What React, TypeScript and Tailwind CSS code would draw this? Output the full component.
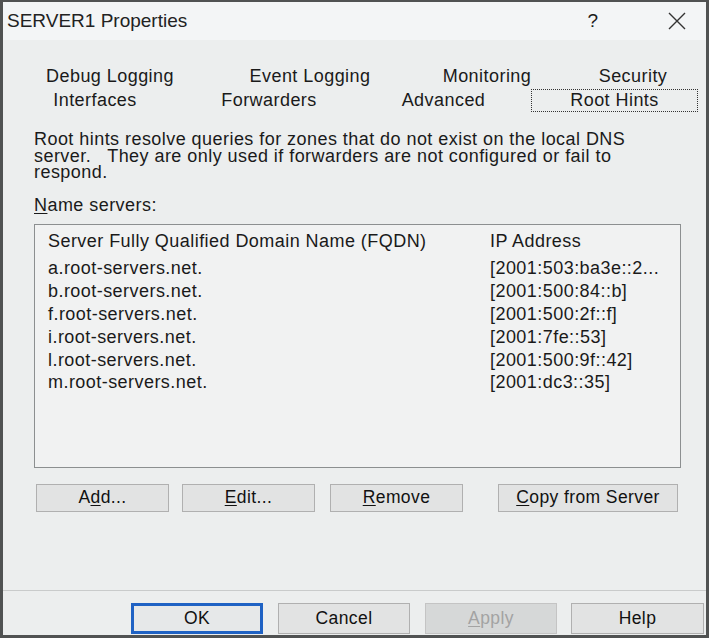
import React from 'react';

const font = { fontFamily: '"Liberation Sans", Arial, sans-serif' };

interface BtnProps {
  children: React.ReactNode;
  className?: string;
  primary?: boolean;
  disabled?: boolean;
}

const WinButton: React.FC<BtnProps> = ({ children, className = '', primary = false, disabled = false }) => (
  <div
    className={`flex items-center justify-center text-[17.5px] tracking-[0.4px] ${
      primary
        ? 'border-[3px] border-[#1f62c4] bg-[#e6e8e9] text-[#111]'
        : disabled
        ? 'border border-[#c4c4c4] bg-[#d6d8d8] text-[#a3a3a3]'
        : 'border border-[#b0b0b0] bg-[#e2e3e3] text-[#111]'
    } ${className}`}
  >
    {children}
  </div>
);

const servers = [
  { name: 'a.root-servers.net.', ip: '[2001:503:ba3e::2...' },
  { name: 'b.root-servers.net.', ip: '[2001:500:84::b]' },
  { name: 'f.root-servers.net.', ip: '[2001:500:2f::f]' },
  { name: 'i.root-servers.net.', ip: '[2001:7fe::53]' },
  { name: 'l.root-servers.net.', ip: '[2001:500:9f::42]' },
  { name: 'm.root-servers.net.', ip: '[2001:dc3::35]' },
];

export default function App() {
  return (
    <div
      style={font}
      className="w-[709px] h-[638px] bg-[#505252] pl-[3px] pr-[3px] pt-[2px] pb-[3px] overflow-hidden"
    >
      <div className="flex flex-col h-full bg-[#eceeee] text-[#1a1a1a]">
        {/* title bar */}
        <div className="flex items-center h-[38px] bg-[#f3f5f6] pl-[4px] pr-[18px]">
          <span className="text-[19px] text-[#222]">SERVER1 Properties</span>
          <span className="ml-auto mr-[70px] text-[19px]">?</span>
          <svg width="18" height="18" viewBox="0 0 18 18" className="mr-[2px]">
            <path d="M1 1 L17 17 M17 1 L1 17" stroke="#333" strokeWidth="1.4" />
          </svg>
        </div>

        {/* tabs */}
        <div className="pt-[24px] text-[18px] tracking-[0.45px]">
          <div className="flex h-[24px] items-center pl-[7px]">
            <div className="w-[200px] text-center">Debug Logging</div>
            <div className="w-[200px] text-center">Event Logging</div>
            <div className="w-[154px] text-center">Monitoring</div>
            <div className="w-[138px] text-center">Security</div>
          </div>
          <div className="flex h-[24px] items-center pl-[5px]">
            <div className="w-[174px] text-center">Interfaces</div>
            <div className="w-[174px] text-center">Forwarders</div>
            <div className="w-[175px] text-center">Advanced</div>
            <div className="w-[167px] h-[23px] border border-dotted border-[#333] flex items-center justify-center">
              Root Hints
            </div>
          </div>
        </div>

        {/* page */}
        <div className="flex-1 flex flex-col border-b border-[#c9cbcb] pl-[31px] pr-[25px] pt-[19px] text-[18px] tracking-[0.45px]">
          <p className="leading-[16.5px] w-[612px]">
            Root hints resolve queries for zones that do not exist on the local DNS server.&nbsp;&nbsp; They are only used if
            forwarders are not configured or fail to respond.
          </p>
          <div className="mt-[14px] h-[20px] leading-[20px]">
            <span className="underline underline-offset-2">N</span>ame servers:
          </div>
          <div className="mt-[9px] h-[244px] border border-[#8c8f90] bg-[#f1f2f2] pl-[13px] pr-[10px] pt-[6px]">
            <div className="flex h-[22px] items-center">
              <div className="w-[442px]">Server Fully Qualified Domain Name (FQDN)</div>
              <div>IP Address</div>
            </div>
            <div className="mt-[5px] flex flex-col">
              {servers.map((s) => (
                <div key={s.name} className="flex h-[22.8px] items-center">
                  <div className="w-[442px]">{s.name}</div>
                  <div>{s.ip}</div>
                </div>
              ))}
            </div>
          </div>
          <div className="mt-[16px] flex">
            <WinButton className="w-[133px] h-[28px] ml-[2px]">
              A<span className="underline underline-offset-2">d</span>d...
            </WinButton>
            <WinButton className="w-[133px] h-[28px] ml-[13px]">
              <span className="underline underline-offset-2">E</span>dit...
            </WinButton>
            <WinButton className="w-[133px] h-[28px] ml-[15px]">
              <span className="underline underline-offset-2">R</span>emove
            </WinButton>
            <WinButton className="w-[180px] h-[28px] ml-[35px]">
              <span className="underline underline-offset-2">C</span>opy from Server
            </WinButton>
          </div>
        </div>

        {/* footer buttons */}
        <div className="flex h-[44px] items-start pt-[12px] pl-[128px]">
          <WinButton primary className="w-[132px] h-[31px]">OK</WinButton>
          <WinButton className="w-[132px] h-[31px] ml-[15px]">Cancel</WinButton>
          <WinButton disabled className="w-[132px] h-[31px] ml-[15px]">
            <span className="underline underline-offset-2">A</span>pply
          </WinButton>
          <WinButton className="w-[133px] h-[31px] ml-[14px]">Help</WinButton>
        </div>
      </div>
    </div>
  );
}
